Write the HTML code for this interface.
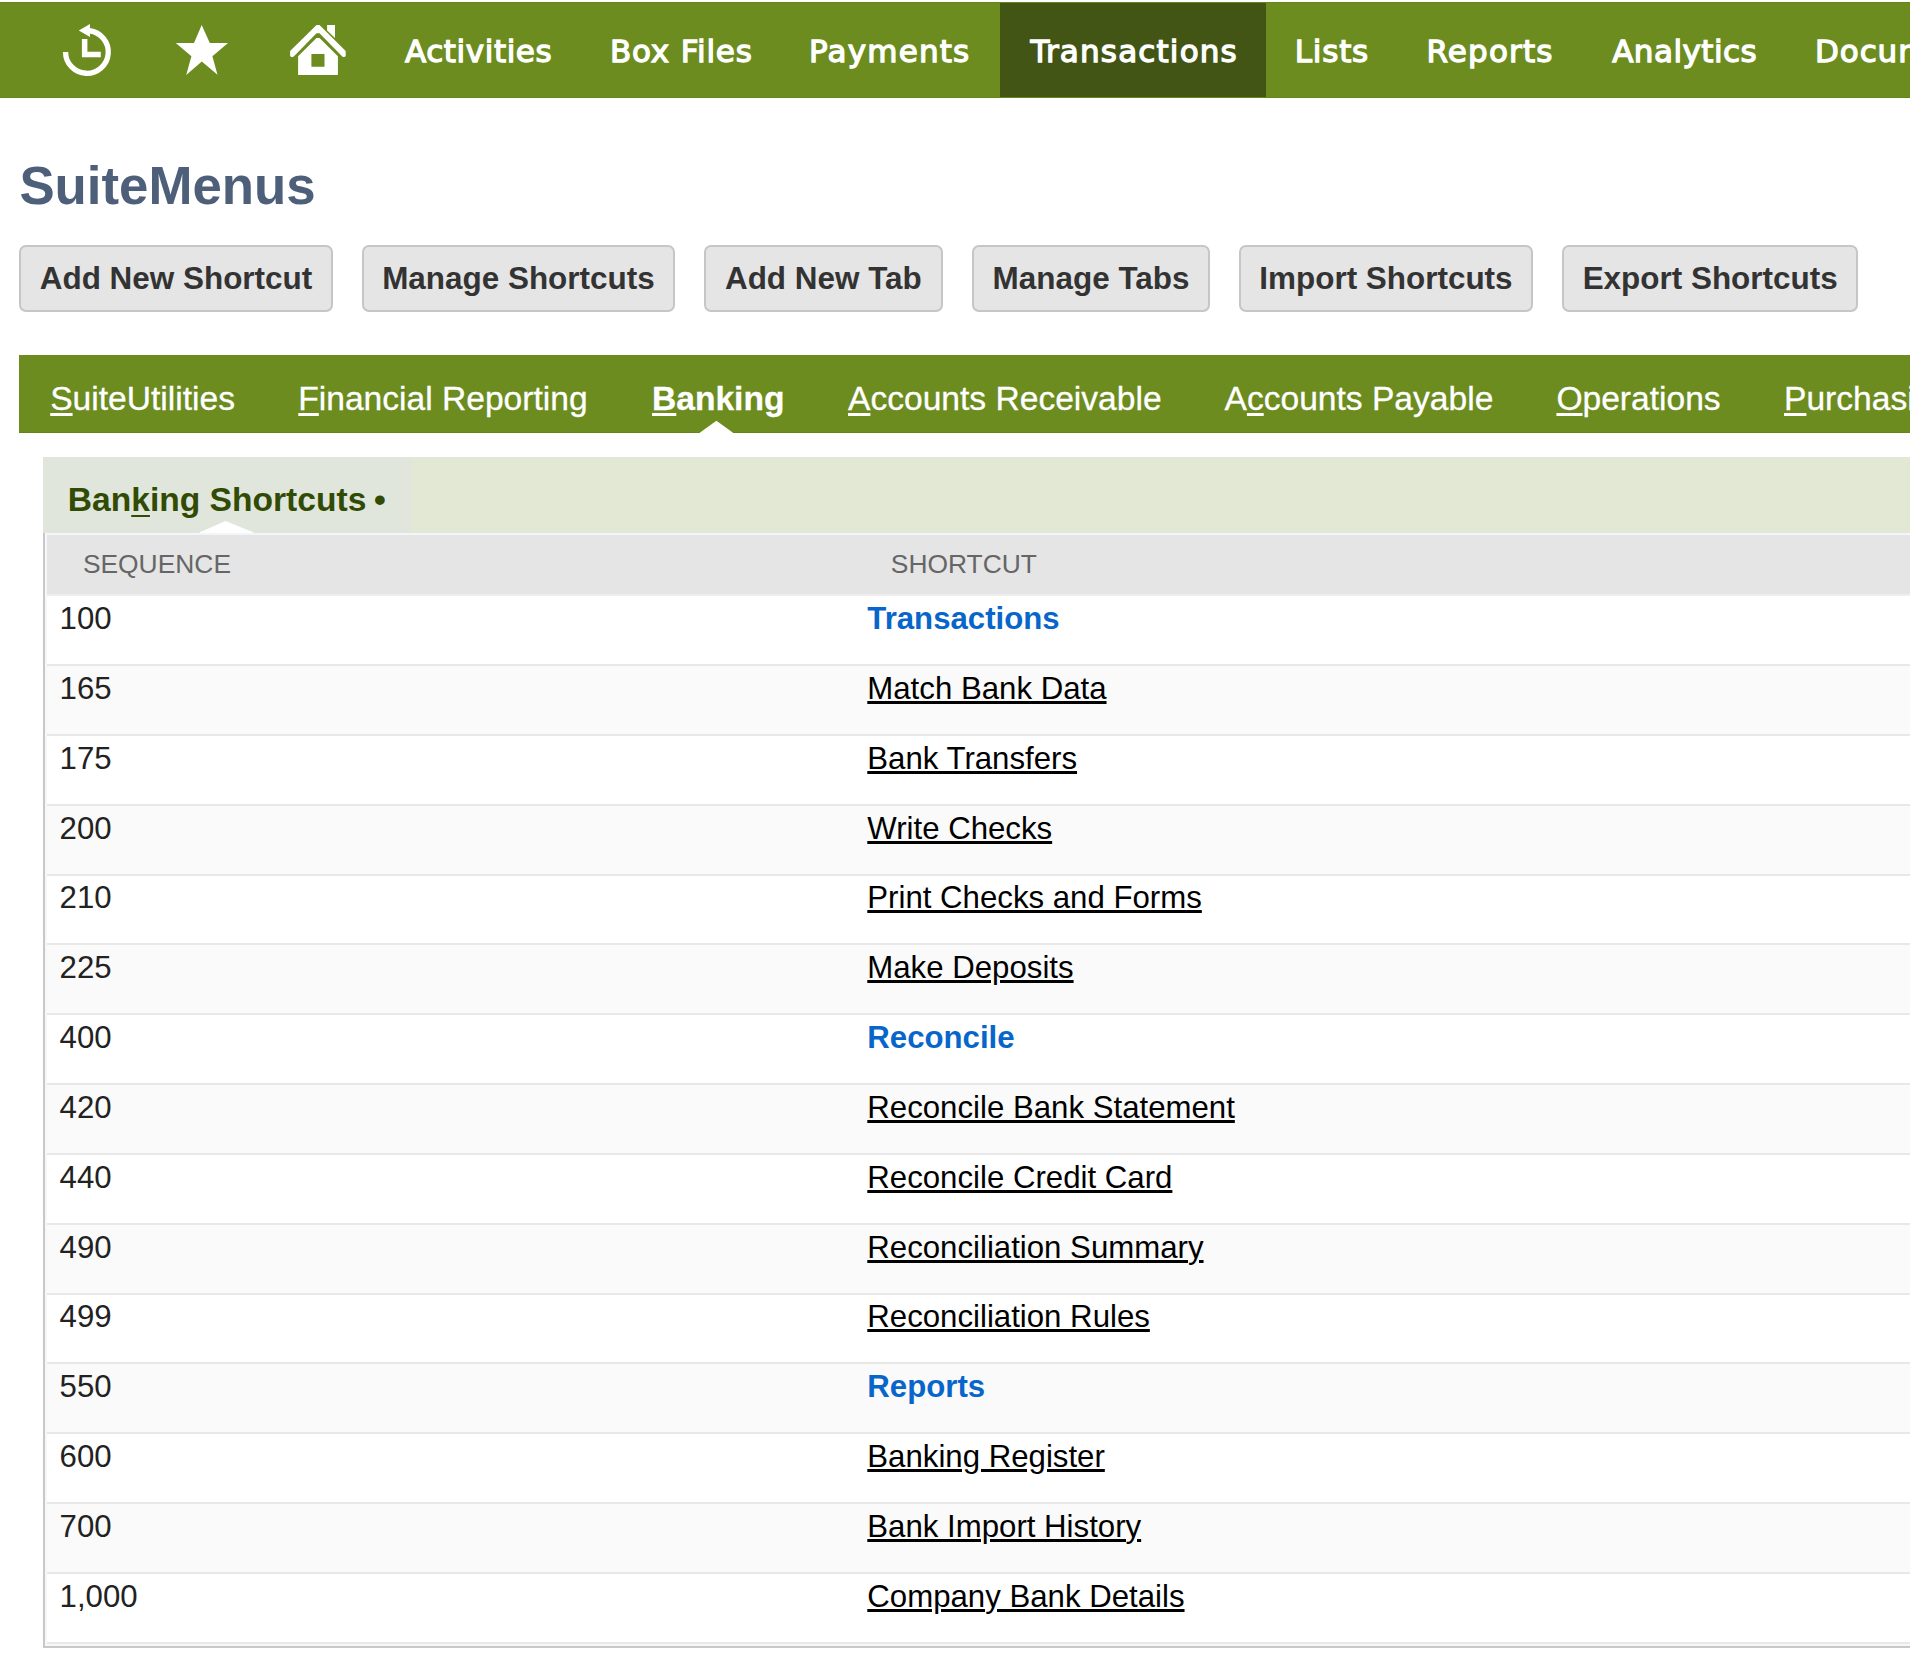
<!DOCTYPE html>
<html lang="en">
<head>
<meta charset="utf-8">
<title>SuiteMenus</title>
<style>
html,body{margin:0;padding:0;background:#fff;}
body{width:1910px;height:1655px;overflow:hidden;position:relative;font-family:"Liberation Sans",Arial,sans-serif;}
.abs{position:absolute;white-space:nowrap;}
/* top nav */
#nav{position:absolute;left:0;top:2px;width:1910px;height:96px;background:#6c8c20;box-sizing:border-box;border-top:1px solid #648614;border-bottom:1px solid #648614;overflow:hidden;}
#nav .sel{position:absolute;left:1000px;top:-1px;width:266px;height:96px;background:#425514;box-sizing:border-box;border-bottom:1px solid #364a02;}
#nav .it{position:absolute;top:-0.5px;height:96px;line-height:96px;color:#fff;font-family:"DejaVu Sans","Liberation Sans",sans-serif;font-size:31px;white-space:nowrap;-webkit-text-stroke:1.3px #fff;}
#nav svg{position:absolute;left:0;top:-3px;}
/* title */
#title{left:19.4px;top:150.7px;font-size:52.8px;font-weight:bold;color:#4d5f79;line-height:70px;}
/* buttons */
.btn{position:absolute;top:245px;height:67px;box-sizing:border-box;border:2px solid #c6c6c6;border-radius:7px;background:#e5e5e5;color:#333;font-weight:bold;font-size:31.45px;line-height:63px;text-align:center;white-space:nowrap;}
/* tab bar */
#tabs{position:absolute;left:19px;top:355px;width:1891px;height:78px;background:#6c8c20;overflow:hidden;box-shadow:inset 0 -1px 0 #648614;}
#tabs .t{position:absolute;top:0;height:78px;line-height:88px;font-size:33.6px;color:#fff;white-space:nowrap;-webkit-text-stroke:0.3px #fff;}
#tabs .t u{text-decoration:underline;text-decoration-thickness:3px;text-underline-offset:3.4px;}
#tabs svg{position:absolute;left:0;top:0;}
/* subtab */
#sub{position:absolute;left:43px;top:457px;width:1867px;height:76px;background:#e3e8d4;}
#sub .selt{position:absolute;left:0;top:0;width:368.6px;height:76px;background:#e0e6dc;}
#sub .lab{position:absolute;left:24.8px;top:0;height:76px;line-height:86px;font-size:33.6px;font-weight:bold;color:#314b04;white-space:nowrap;}
#sub .lab u{text-decoration:underline;text-decoration-thickness:2px;text-underline-offset:4px;}
#sub svg{position:absolute;left:0;top:0;}
/* table */
#tb{position:absolute;left:43px;top:533px;width:1867px;height:1115px;box-sizing:border-box;border-left:2px solid #c8c8c8;border-bottom:2px solid #c8c8c8;background:#f6f7f9;overflow:hidden;}
#hd{position:absolute;left:2px;top:0;width:1865px;height:63px;box-sizing:border-box;background:#e5e5e5;border-top:2px solid #f4f5f8;border-bottom:2px solid #eeeeef;}
#hd span{position:absolute;top:0;line-height:58px;font-size:26.4px;color:#666;}
.r{position:absolute;left:2px;width:1865px;box-sizing:border-box;border-bottom:2px solid #e8e8e8;background:#fff;font-size:31.2px;color:#222;}
.r.alt{background:#fafafa;}
.r span{position:absolute;line-height:36px;white-space:nowrap;}
.r .s{left:12.6px;}
.r .c{left:820.3px;color:#000;text-decoration:underline;}
.r .h{left:820.3px;color:#0866cb;font-weight:bold;}
</style>
</head>
<body>
<div id="nav">
<div class="sel"></div>
<svg width="380" height="96" viewBox="0 0 380 96">
<g transform="translate(0,2)"><g fill="none" stroke="#fff" stroke-width="5.3">
<path d="M65.55 49.9 A21.35 21.35 0 1 0 89.5 28.75"/>
</g>
<g fill="#fff">
<path d="M78.8 28.4 L90 21.9 L90 35 Z"/>
<path d="M81.9 37 H87.4 V49.8 H100.8 V55.3 H81.9 Z"/>
<path d="M201.7 22.9 L209.8 40.9 L228 40.9 L212.4 54.2 L217.5 72.7 L201.8 59.5 L186.2 72.9 L191.4 54.2 L175.8 40.9 L194 40.9 Z"/>
<path d="M316.5 22.9 H319.5 L345.7 49 V53.6 Q345.7 55 344.3 55 H343 L342 54.2 L319.5 31.2 H316.5 L294 54.2 L293 55 H291.5 Q290.1 55 290.1 53.6 V49 Z"/>
<path d="M327.1 22.9 H335 V36.1 L327.1 28.4 Z"/>
<path fill-rule="evenodd" d="M316.5 36.1 H319.5 L337.9 54.2 V72.9 H298.1 V54.2 Z M311.4 51.9 H324.5 V64.8 H311.4 Z"/>
</g></g>
</svg>
<div class="it" style="left:405px;letter-spacing:0.58px">Activities</div>
<div class="it" style="left:610px;letter-spacing:0.79px">Box Files</div>
<div class="it" style="left:809px;letter-spacing:1.2px">Payments</div>
<div class="it" style="left:1030.4px;letter-spacing:1.17px">Transactions</div>
<div class="it" style="left:1294.8px;letter-spacing:0.77px">Lists</div>
<div class="it" style="left:1426.5px;letter-spacing:1.17px">Reports</div>
<div class="it" style="left:1612.2px;letter-spacing:0.46px">Analytics</div>
<div class="it" style="left:1815px;letter-spacing:0.9px">Documents</div>
</div>

<div id="title" class="abs">SuiteMenus</div>

<div class="btn" style="left:19.2px;width:313.6px">Add New Shortcut</div>
<div class="btn" style="left:361.6px;width:313.6px">Manage Shortcuts</div>
<div class="btn" style="left:704.1px;width:238.5px">Add New Tab</div>
<div class="btn" style="left:972.2px;width:237.7px">Manage Tabs</div>
<div class="btn" style="left:1238.7px;width:294.5px">Import Shortcuts</div>
<div class="btn" style="left:1562px;width:296.3px">Export Shortcuts</div>

<div id="tabs">
<div class="t" style="left:31.2px"><u>S</u>uiteUtilities</div>
<div class="t" style="left:279.3px"><u>F</u>inancial Reporting</div>
<div class="t" style="left:633px;font-weight:bold"><u>B</u>anking</div>
<div class="t" style="left:829px"><u>A</u>ccounts Receivable</div>
<div class="t" style="left:1205.5px">A<u>c</u>counts Payable</div>
<div class="t" style="left:1537.4px"><u>O</u>perations</div>
<div class="t" style="left:1765px"><u>P</u>urchasing</div>
<svg width="800" height="78" viewBox="0 0 800 78"><path fill="#fff" d="M680.4 78 L697.4 65.8 L714.4 78 Z"/></svg>
</div>

<div id="sub">
<div class="selt"></div>
<div class="lab">Ban<u>k</u>ing Shortcuts<span style="letter-spacing:-1.6px"> </span>•</div>
<svg width="400" height="76" viewBox="0 0 400 76"><path fill="#fff" d="M156.8 76 V75.2 L182.6 63.9 L210.2 75.2 V76 Z"/></svg>
</div>

<div id="tb">
<div id="hd"><span style="left:35.9px">SEQUENCE</span><span style="left:843.8px">SHORTCUT</span></div>
<div class="r" style="top:63px;height:70px"><span class="s" style="top:4.6px">100</span><span class="h" style="top:4.6px">Transactions</span></div>
<div class="r alt" style="top:133px;height:70px"><span class="s" style="top:4.6px">165</span><span class="c" style="top:4.6px">Match Bank Data</span></div>
<div class="r" style="top:203px;height:70px"><span class="s" style="top:4.6px">175</span><span class="c" style="top:4.6px">Bank Transfers</span></div>
<div class="r alt" style="top:273px;height:70px"><span class="s" style="top:4.6px">200</span><span class="c" style="top:4.6px">Write Checks</span></div>
<div class="r" style="top:343px;height:69px"><span class="s" style="top:3.6px">210</span><span class="c" style="top:3.6px">Print Checks and Forms</span></div>
<div class="r alt" style="top:412px;height:70px"><span class="s" style="top:4.6px">225</span><span class="c" style="top:4.6px">Make Deposits</span></div>
<div class="r" style="top:482px;height:70px"><span class="s" style="top:4.6px">400</span><span class="h" style="top:4.6px">Reconcile</span></div>
<div class="r alt" style="top:552px;height:70px"><span class="s" style="top:4.6px">420</span><span class="c" style="top:4.6px">Reconcile Bank Statement</span></div>
<div class="r" style="top:622px;height:70px"><span class="s" style="top:4.6px">440</span><span class="c" style="top:4.6px">Reconcile Credit Card</span></div>
<div class="r alt" style="top:692px;height:70px"><span class="s" style="top:4.6px">490</span><span class="c" style="top:4.6px">Reconciliation Summary</span></div>
<div class="r" style="top:762px;height:69px"><span class="s" style="top:3.6px">499</span><span class="c" style="top:3.6px">Reconciliation Rules</span></div>
<div class="r alt" style="top:831px;height:70px"><span class="s" style="top:4.6px">550</span><span class="h" style="top:4.6px">Reports</span></div>
<div class="r" style="top:901px;height:70px"><span class="s" style="top:4.6px">600</span><span class="c" style="top:4.6px">Banking Register</span></div>
<div class="r alt" style="top:971px;height:70px"><span class="s" style="top:4.6px">700</span><span class="c" style="top:4.6px">Bank Import History</span></div>
<div class="r" style="top:1041px;height:70px"><span class="s" style="top:4.6px">1,000</span><span class="c" style="top:4.6px">Company Bank Details</span></div>
</div>
</body>
</html>
